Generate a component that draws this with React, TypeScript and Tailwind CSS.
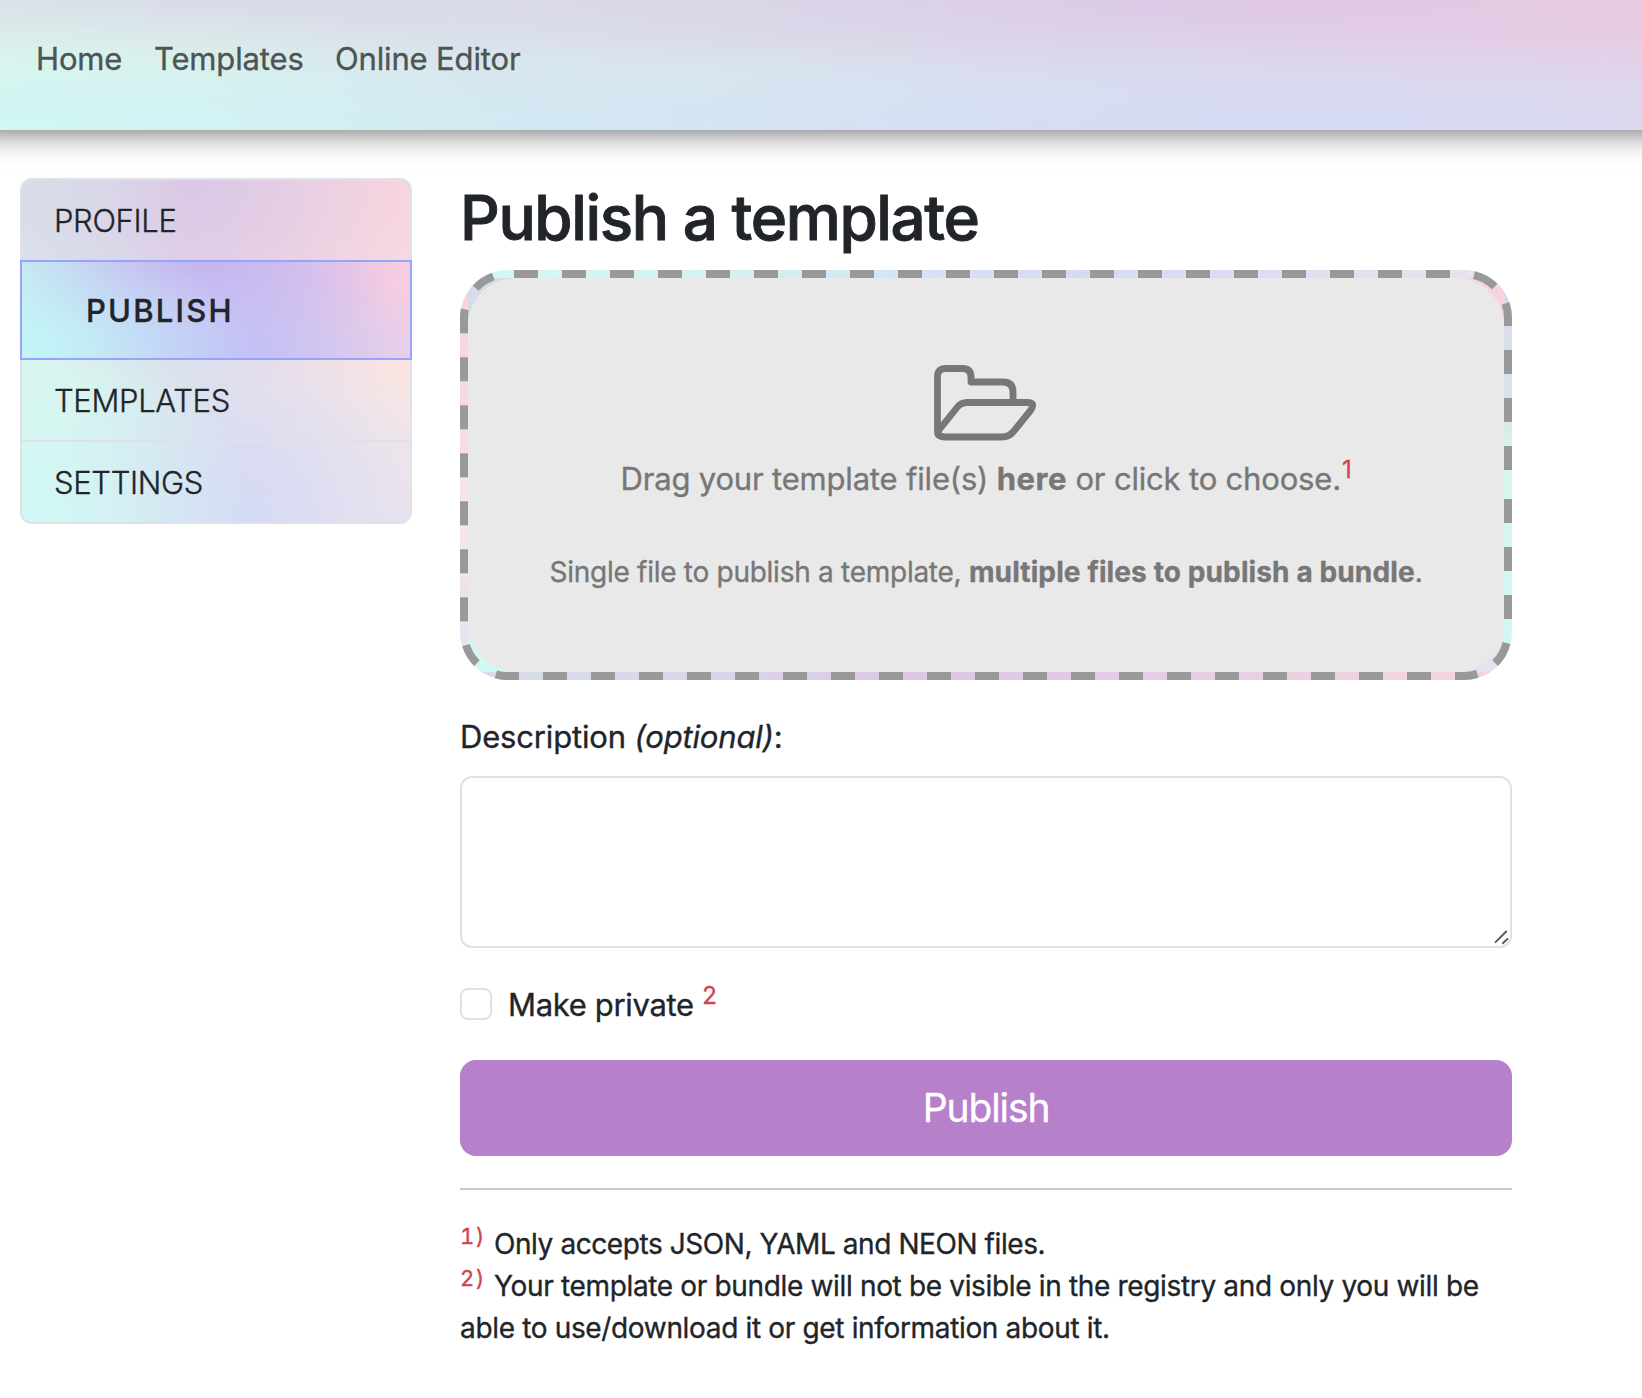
import React from "react";

const dashes = [
  { d: "M514 274H1464A44 44 0 0 1 1495.1 286.9", offset: 0 },
  { d: "M1505.5 303.3A44 44 0 0 1 1508 318V470", offset: 1 },
  { d: "M1508 499V632A44 44 0 0 1 1495.1 663.1", offset: 0 },
  { d: "M1477.4 673.9A44 44 0 0 1 1464 676H508A44 44 0 0 1 495.9 674.3", offset: 1.4 },
  { d: "M476.9 663.1A44 44 0 0 1 464 632V318A44 44 0 0 1 493.3 276.5", offset: 2.8 },
];

const mesh =
  "bg-[radial-gradient(ellipse_60%_60%_at_0%_100%,#d0f9f6,transparent),radial-gradient(ellipse_50%_65%_at_57%_100%,#d4daf5,transparent),radial-gradient(ellipse_60%_45%_at_100%_100%,#ece4ee,transparent),radial-gradient(ellipse_45%_45%_at_0%_0%,#d7dce8,transparent),radial-gradient(ellipse_60%_65%_at_42%_0%,#dcc6e5,transparent),radial-gradient(ellipse_75%_60%_at_100%_6%,#f9d4dd,transparent),radial-gradient(ellipse_65%_60%_at_0%_58%,#daf6ec,transparent),radial-gradient(ellipse_70%_60%_at_100%_58%,#f9e6e3,transparent),linear-gradient(to_right,#dbe9ee,#dedcec_50%,#f0e2e8)]";

const activeMesh =
  "bg-[radial-gradient(ellipse_60%_120%_at_0%_90%,#c2f5f8,transparent),radial-gradient(ellipse_55%_130%_at_52%_100%,#c1c1f7,transparent),radial-gradient(ellipse_50%_110%_at_48%_0%,#c5b2ee,transparent),radial-gradient(ellipse_80%_130%_at_100%_20%,#f8ccdf,transparent),linear-gradient(to_right,#c8e6f0,#cbbfee_50%,#e6d6ec)]";

const headerMesh =
  "bg-[radial-gradient(ellipse_35%_65%_at_0%_100%,#d0f7f6,transparent),radial-gradient(ellipse_45%_75%_at_80%_100%,#d5d9f5,transparent),radial-gradient(ellipse_45%_70%_at_35%_100%,#d2e8f4,transparent),radial-gradient(ellipse_30%_60%_at_0%_58%,#daf5ec,transparent),radial-gradient(ellipse_30%_90%_at_100%_0%,#e6cae3,transparent),radial-gradient(ellipse_55%_75%_at_80%_0%,#dcc6e5,transparent),radial-gradient(ellipse_50%_60%_at_20%_0%,#d9d9e8,transparent),linear-gradient(to_right,#dcebe9,#dae7ec_30%,#dbe1eb_60%,#e4dbe8)]";

function Folder() {
  return (
    <svg viewBox="0 0 104 78" className="relative -left-px h-[78px] w-[104px]" fill="none" stroke="#777" strokeWidth="6.8" strokeLinejoin="round">
      <path d="M4.5 66V13Q4.5 4.5 13 4.5H29.500Q38 4.5 38 13V18H70Q80 18 80 28V38.500" />
      <path d="M4.500 66Q4.500 73 12 73H69Q76 73 80.500 67.500L97.500 46.500Q101 41.500 99 39.500Q97 38.500 93.500 38.500H34Q28 38.500 24 43.500L6 66Q3 70.500 7 72" />
    </svg>
  );
}

export default function App() {
  return (
    <div className="min-h-[1398px] w-[1642px] overflow-hidden bg-white font-['Inter',sans-serif] text-[#212529] [-webkit-text-stroke:0.35px]">
      <header className={`relative h-[130px] shadow-[0_-30px_30px_30px_rgba(0,0,0,0.66)] ${headerMesh}`}>
        <nav className="flex h-[118px] items-center gap-[32px] pl-[36px] text-[31px] text-[#4d5454]">
          <a className="w-[86px] whitespace-nowrap tracking-[-0.15px]">Home</a>
          <a className="w-[149px] whitespace-nowrap tracking-[-0.15px]">Templates</a>
          <a className="whitespace-nowrap tracking-[-0.15px]">Online Editor</a>
        </nav>
      </header>

      <div className="flex pt-[48px]">
        <aside className={`ml-[20px] flex h-[346px] w-[392px] flex-col rounded-[12px] border-2 border-[#dee2e6] text-[31px] font-light ${mesh}`}>
          <a className="flex h-[80px] items-center pt-[2px] pl-[32px] tracking-[-0.35px]">PROFILE</a>
          <a className={`-mx-[2px] flex h-[100px] items-center border-2 border-[#96a4fb] pt-[2px] pl-[64px] font-medium tracking-[2.2px] ${activeMesh}`}>PUBLISH</a>
          <a className="flex h-[80px] items-center pt-[2px] pl-[32px] tracking-[-0.35px]">TEMPLATES</a>
          <a className="flex h-[82px] items-center border-t-2 border-[#dee2e6] pt-[2px] pl-[32px] tracking-[-0.35px]">SETTINGS</a>
        </aside>

        <main className="ml-[48px] w-[1052px]">
          <h1 className="h-[92px] whitespace-nowrap text-[62px] leading-[79px] font-medium tracking-[-1.4px] [-webkit-text-stroke:0.9px]">Publish a template</h1>

          <section className={`relative h-[410px] rounded-[48px] border-8 border-transparent ${mesh}`}>
            <div className="flex h-full flex-col items-center rounded-[48px] bg-[#e9e9e9] pt-[86px] text-[#777]">
              <Folder />
              <p className="mt-[13px] h-[48px] text-[31px] leading-[48px] whitespace-nowrap tracking-[-0.18px]">
                Drag your template file(s) <b className="tracking-[0.5px]">here</b> or click to choose.
                <sup className="top-[-12px] ml-px text-[24px] leading-none align-baseline text-[#d0444f]">1</sup>
              </p>
              <p className="mt-[48px] h-[42px] text-[28px] leading-[42px] whitespace-nowrap tracking-[-0.27px]">
                Single file to publish a template, <b className="tracking-[0.12px]">multiple files to publish a bundle</b>.
              </p>
            </div>
            <svg viewBox="460 270 1052 410" className="pointer-events-none absolute -top-2 -left-2 h-[410px] w-[1052px]" fill="none" stroke="#999" strokeWidth="8">
              {dashes.map((s) => (
                <path key={s.d} d={s.d} strokeDasharray="24 24" strokeDashoffset={s.offset} />
              ))}
            </svg>
          </section>

          <label className="mt-[32px] flex h-[64px] pt-[1px] text-[31px] leading-[48px] whitespace-pre tracking-[-0.17px]">
            Description <i>(optional)</i>:
          </label>
          <div className="relative h-[172px]">
            <textarea className="block h-[172px] w-full resize-none rounded-[12px] border-2 border-[#dee2e6] bg-white" />
            <svg viewBox="0 0 16 16" className="absolute right-[2px] bottom-[2px] h-4 w-4" fill="none" stroke="#5a5a5a" strokeWidth="1.9">
              <path d="M1 12.700L12.700 1M8.300 13.700L14 8.500" />
            </svg>
          </div>

          <label className="mt-[32px] flex h-[48px] items-center gap-[16px] text-[31px] leading-[48px] tracking-[-0.33px]">
            <span className="h-[32px] w-[32px] rounded-[8px] border-2 border-[#dee2e6]" />
            <span className="pt-[2px] whitespace-nowrap">
              Make private <sup className="top-[-12px] text-[24px] leading-none align-baseline text-[#d0444f]">2</sup>
            </span>
          </label>

          <button className="mt-[32px] block h-[96px] w-full rounded-[16px] bg-[#b680cb] text-[39px] tracking-[-1.1px] text-white">Publish</button>
          <hr className="mt-[32px] h-0 border-t-2 border-[#c8c8c8]" />

          <div className="mt-[33px] text-[28px] leading-[42px] whitespace-nowrap tracking-[-0.34px]">
            <p className="tracking-[-0.42px]">
              <sup className="top-[-10px] inline-block w-[34px] text-[22px] leading-none align-baseline tracking-[1.5px] tabular-nums text-[#d0444f]">1)</sup>
              Only accepts JSON, YAML and NEON files.
            </p>
            <p>
              <sup className="top-[-10px] inline-block w-[34px] text-[22px] leading-none align-baseline tracking-[1.5px] tabular-nums text-[#d0444f]">2)</sup>
              Your template or bundle will not be visible in the registry and only you will be
            </p>
            <p>able to use/download it or get information about it.</p>
          </div>
        </main>
      </div>
    </div>
  );
}
